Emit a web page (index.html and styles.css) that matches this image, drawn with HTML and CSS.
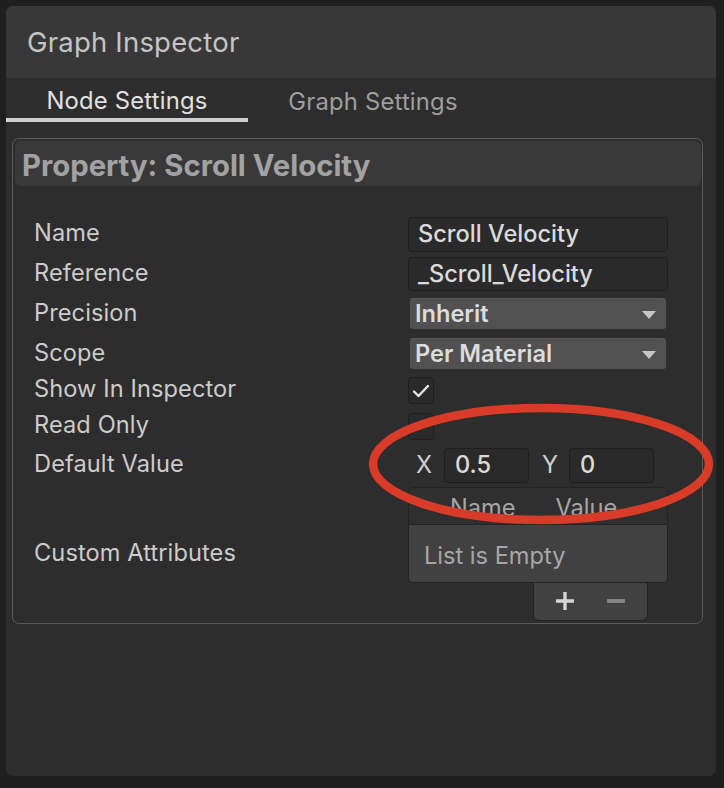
FILE: index.html
```html
<!DOCTYPE html>
<html>
<head>
<meta charset="utf-8">
<link rel="stylesheet" href="styles.css">
</head>
<body>
<div class="panel">
  <div class="header">Graph Inspector</div>
  <div class="tabs">
    <div class="tab active">Node Settings</div>
    <div class="tab second">Graph Settings</div>
  </div>
  <div class="content">
    <div class="box">
      <div class="box-title">Property: Scroll Velocity</div>
      <div class="rows">
        <div class="row r40"><div class="label">Name</div><div class="field text">Scroll Velocity</div></div>
        <div class="row r40"><div class="label">Reference</div><div class="field text ref">_Scroll_Velocity</div></div>
        <div class="row r40"><div class="label">Precision</div><div class="field drop"><span>Inherit</span><span class="arrow"></span></div></div>
        <div class="row r40"><div class="label">Scope</div><div class="field drop"><span>Per Material</span><span class="arrow"></span></div></div>
        <div class="row r32"><div class="label">Show In Inspector</div><div class="check"><svg width="18" height="14" viewBox="0 0 18 14"><path d="M2 7.5 L6.5 12 L16 2" fill="none" stroke="#e6e6e6" stroke-width="2.4" stroke-linecap="round" stroke-linejoin="round"/></svg></div></div>
        <div class="row r40"><div class="label">Read Only</div><div class="check"></div></div>
        <div class="row r38"><div class="label">Default Value</div>
          <div class="vector">
            <span class="vlabel">X</span><div class="vfield">0.5</div>
            <span class="vlabel y">Y</span><div class="vfield">0</div>
          </div>
        </div>
        <div class="row list-row"><div class="label">Custom Attributes</div>
          <div class="list">
            <div class="list-head"><span class="h-name">Name</span><span class="h-value">Value</span></div>
            <div class="list-body">List is Empty</div>
            <div class="list-foot">
              <svg width="20" height="20" viewBox="0 0 20 20"><path d="M10 1 V19 M1 10 H19" stroke="#d4d4d4" stroke-width="3.4"/></svg>
              <svg width="18" height="20" viewBox="0 0 18 20"><path d="M1 10 H17" stroke="#858585" stroke-width="4" stroke-linecap="round"/></svg>
            </div>
          </div>
        </div>
      </div>
    </div>
  </div>
  <svg class="annot" width="360" height="132" viewBox="0 0 360 132"><ellipse cx="180" cy="66" rx="168" ry="56" fill="none" stroke="#d83b27" stroke-width="8.5"/></svg>
</div>
</body>
</html>
```

FILE: styles.css
```css
* { box-sizing: border-box; }
html, body { margin: 0; padding: 0; }
body {
  background: #1f1f1f;
  width: 724px;
  height: 788px;
  overflow: hidden;
  font-family: Inter, "Noto Sans", sans-serif;
  padding: 6px 8px 12px 6px;
}
.panel {
  position: relative;
  width: 710px;
  height: 770px;
  background: #2d2d2d;
  border-radius: 7px;
  overflow: hidden;
}
.header {
  height: 72px;
  background: #383838;
  color: #c4c4c4;
  font-size: 27.5px;
  padding-left: 21px;
  display: flex;
  align-items: center;
  padding-bottom: 1px;
  letter-spacing: 0.2px;
}
.tabs {
  display: flex;
  height: 44px;
}
.tab {
  width: 242px;
  display: flex;
  justify-content: center;
  align-items: center;
  padding-top: 2px;
  font-size: 23.8px;
  color: #9e9e9e;
  letter-spacing: 0.2px;
}
.tab.second { padding-left: 8px; }
.tab.active {
  color: #e0e0e0;
  border-bottom: 4px solid #cfcfcf;
  padding-top: 4px;
}
.content {
  padding: 16px 13px 0 6px;
}
.box {
  border: 1px solid #5b5b5b;
  border-radius: 7px;
  padding: 2px 1px 2px 2px;
  height: 486px;
}
.box-title {
  height: 45px;
  background: #393939;
  border-radius: 6px;
  color: #a2a2a2;
  font-weight: 700;
  font-size: 29.3px;
  padding-left: 7px;
  display: flex;
  align-items: center;
  padding-top: 4px;
}
.rows {
  margin-top: 28px;
  padding-left: 19px;
  display: flex;
  flex-direction: column;
}
.row {
  display: flex;
  align-items: center;
}
.r40 { height: 40px; }
.r38 { height: 38px; }
.r32 { height: 32px; }
.label {
  width: 374px;
  flex: none;
  font-size: 23.6px;
  color: #cbcbcb;
  padding-bottom: 3px;
  letter-spacing: 0.1px;
}
.field {
  width: 260px;
  border-radius: 4px;
  font-size: 23.6px;
  display: flex;
  align-items: center;
}
.text {
  height: 35px;
  background: #2a2a2a;
  border: 1px solid #1f1f1f;
  color: #dadada;
  font-weight: 500;
  padding-left: 9px;
  padding-bottom: 1px;
}
.text.ref { height: 34px; }
.drop {
  height: 32px;
  width: 258px;
  margin-left: 1px;
  background: #515151;
  border: 1px solid #303030;
  border-top-color: #585858;
  color: #dcdcdc;
  font-weight: 600;
  padding-left: 5px;
  padding-right: 10px;
  justify-content: space-between;
  padding-bottom: 1px;
}
.arrow {
  width: 0;
  height: 0;
  border-left: 7px solid transparent;
  border-right: 7px solid transparent;
  border-top: 8px solid #c4c4c4;
  margin-top: 2px;
}
.check {
  width: 26px;
  height: 27px;
  background: #2a2a2a;
  border: 1px solid #1f1f1f;
  border-radius: 4px;
  display: flex;
  align-items: center;
  justify-content: center;
  padding-top: 1px;
}
.vector {
  display: flex;
  align-items: center;
  padding-left: 8px;
}
.vlabel {
  font-size: 23.6px;
  color: #cfcfcf;
  width: 28px;
  padding-bottom: 1px;
}
.vlabel.y { margin-left: 13px; width: 27px; }
.vfield {
  width: 85px;
  height: 35px;
  background: #2a2a2a;
  border: 1px solid #1f1f1f;
  border-radius: 4px;
  color: #dadada;
  font-size: 23.6px;
  font-weight: 500;
  padding-left: 10px;
  display: flex;
  align-items: center;
  padding-bottom: 1px;
}
.list-row { padding-top: 3px; }
.list {
  width: 260px;
  display: flex;
  flex-direction: column;
  align-items: flex-end;
}
.list-head {
  align-self: stretch;
  height: 38px;
  border: 1px solid #232323;
  border-radius: 5px 5px 0 0;
  background: #2f2f2f;
  color: #a6a6a6;
  font-size: 23.6px;
  display: flex;
  align-items: flex-end;
  padding-left: 41px;
  padding-bottom: 4px;
  line-height: 24px;
}
.h-value { margin-left: 40px; }
.list-body {
  align-self: stretch;
  height: 58px;
  background: #414141;
  border: 1px solid #232323;
  border-top: none;
  border-radius: 0 0 5px 5px;
  color: #a6a6a6;
  font-size: 23.6px;
  padding-left: 15px;
  display: flex;
  align-items: center;
  padding-top: 3px;
}
.list-foot {
  width: 115px;
  height: 38px;
  margin-right: 20px;
  background: #414141;
  border: 1px solid #232323;
  border-top: none;
  border-radius: 0 0 6px 6px;
  display: flex;
  align-items: center;
  padding-left: 21px;
  gap: 32px;
  padding-bottom: 2px;
}
.annot {
  position: absolute;
  left: 355px;
  top: 392px;
  pointer-events: none;
}
```
